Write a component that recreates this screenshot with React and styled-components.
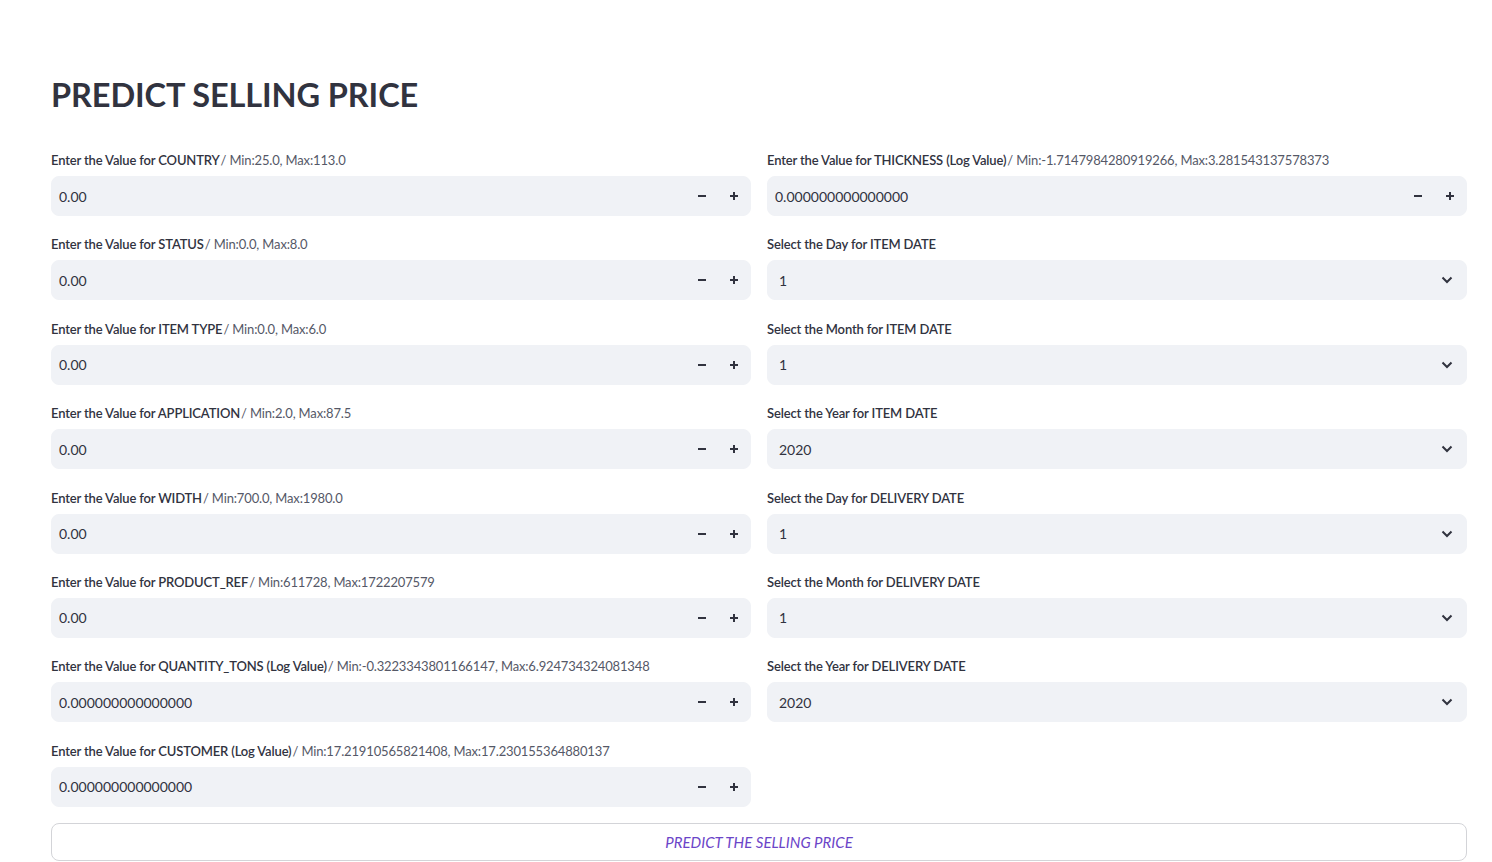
import React from 'react'
import styled, { createGlobalStyle } from 'styled-components'

const leftFields = [
    { name: 'COUNTRY', range: 'Min:25.0, Max:113.0', value: '0.00' },
    { name: 'STATUS', range: 'Min:0.0, Max:8.0', value: '0.00' },
    { name: 'ITEM TYPE', range: 'Min:0.0, Max:6.0', value: '0.00' },
    { name: 'APPLICATION', range: 'Min:2.0, Max:87.5', value: '0.00' },
    { name: 'WIDTH', range: 'Min:700.0, Max:1980.0', value: '0.00' },
    { name: 'PRODUCT_REF', range: 'Min:611728, Max:1722207579', value: '0.00' },
    { name: 'QUANTITY_TONS (Log Value)', range: 'Min:-0.3223343801166147, Max:6.924734324081348', value: '0.000000000000000' },
    { name: 'CUSTOMER (Log Value)', range: 'Min:17.21910565821408, Max:17.230155364880137', value: '0.000000000000000' },
]

const selects = [
    { label: 'Select the Day for ITEM DATE', value: '1' },
    { label: 'Select the Month for ITEM DATE', value: '1' },
    { label: 'Select the Year for ITEM DATE', value: '2020' },
    { label: 'Select the Day for DELIVERY DATE', value: '1' },
    { label: 'Select the Month for DELIVERY DATE', value: '1' },
    { label: 'Select the Year for DELIVERY DATE', value: '2020' },
]

const GlobalStyle = createGlobalStyle`
    html, body {
        margin: 0;
        overflow: hidden;
        background: #fff;
    }
    * {
        box-sizing: border-box;
    }
`

const NumberField = ({ name, range, value }) => (
    <Field>
        <Label>
            Enter the Value for {name}<Range>/ {range}</Range>
        </Label>
        <InputBox>
            <Value>{value}</Value>
            <Step>
                <svg width="10" height="10" viewBox="0 0 10 10"><path d="M1 5h8" stroke="#31333F" strokeWidth="2" /></svg>
            </Step>
            <Step>
                <svg width="10" height="10" viewBox="0 0 10 10"><path d="M1 5h8M5 1v8" stroke="#31333F" strokeWidth="2" /></svg>
            </Step>
        </InputBox>
    </Field>
)

const SelectField = ({ label, value }) => (
    <Field>
        <Label>{label}</Label>
        <SelectBox>
            <SelectValue>{value}</SelectValue>
            <svg width="12" height="8" viewBox="0 0 12 8">
                <path d="M1.5 1.5L6 6l4.5-4.5" fill="none" stroke="#31333F" strokeWidth="2" />
            </svg>
        </SelectBox>
    </Field>
)

const App = () => {
    return (
        <Page>
            <GlobalStyle />
            <Title>PREDICT SELLING PRICE</Title>
            <Columns>
                <Column>
                    {leftFields.map(f => <NumberField key={f.name} {...f} />)}
                </Column>
                <Column>
                    <NumberField
                        name="THICKNESS (Log Value)"
                        range="Min:-1.7147984280919266, Max:3.281543137578373"
                        value="0.000000000000000"
                    />
                    {selects.map(s => <SelectField key={s.label} {...s} />)}
                </Column>
            </Columns>
            <PredictButton>PREDICT THE SELLING PRICE</PredictButton>
        </Page>
    )
}

const Page = styled.div`
    padding: 72px 25px 0 51px;
    font-family: Lato, "Noto Sans", sans-serif;
    color: #31333F;
`

const Title = styled.h1`
    margin: 0 0 30px;
    font-size: 32.5px;
    font-weight: 700;
    line-height: 46px;
    letter-spacing: -0.1px;
    color: #31333F;
`

const Columns = styled.div`
    display: grid;
    grid-template-columns: 1fr 1fr;
    gap: 16px;
`

const Column = styled.div`
    display: flex;
    flex-direction: column;
    gap: 16.4px;
`

const Field = styled.div`
    display: flex;
    flex-direction: column;
`

const Label = styled.label`
    display: flex;
    align-items: center;
    min-height: 24px;
    margin-bottom: 4px;
    font-size: 13px;
    font-weight: 600;
    letter-spacing: -0.15px;
    color: #31333F;
    white-space: nowrap;
`

const Range = styled.span`
    font-weight: 400;
    color: #555867;
    margin-left: 1px;
`

const InputBox = styled.div`
    display: flex;
    align-items: center;
    height: 40px;
    border: 1px solid #F0F2F6;
    border-radius: 8px;
    background: #F0F2F6;
`

const Value = styled.span`
    flex: 1;
    padding-left: 7px;
    font-size: 14px;
    color: #31333F;
`

const Step = styled.span`
    display: flex;
    align-items: center;
    justify-content: center;
    width: 32px;
    height: 100%;
`

const SelectBox = styled.div`
    display: flex;
    align-items: center;
    justify-content: space-between;
    height: 40px;
    padding: 0 13px 0 11px;
    border: 1px solid #F0F2F6;
    border-radius: 8px;
    background: #F0F2F6;
`

const SelectValue = styled.span`
    font-size: 14px;
    color: #31333F;
`

const PredictButton = styled.button`
    display: block;
    width: 100%;
    height: 38px;
    margin-top: 16px;
    border: 1px solid #D3D4D8;
    border-radius: 8px;
    background: #fff;
    font-family: Lato, "Noto Sans", sans-serif;
    font-size: 15px;
    font-style: italic;
    color: #6B45C8;
    cursor: pointer;
`

export default App
